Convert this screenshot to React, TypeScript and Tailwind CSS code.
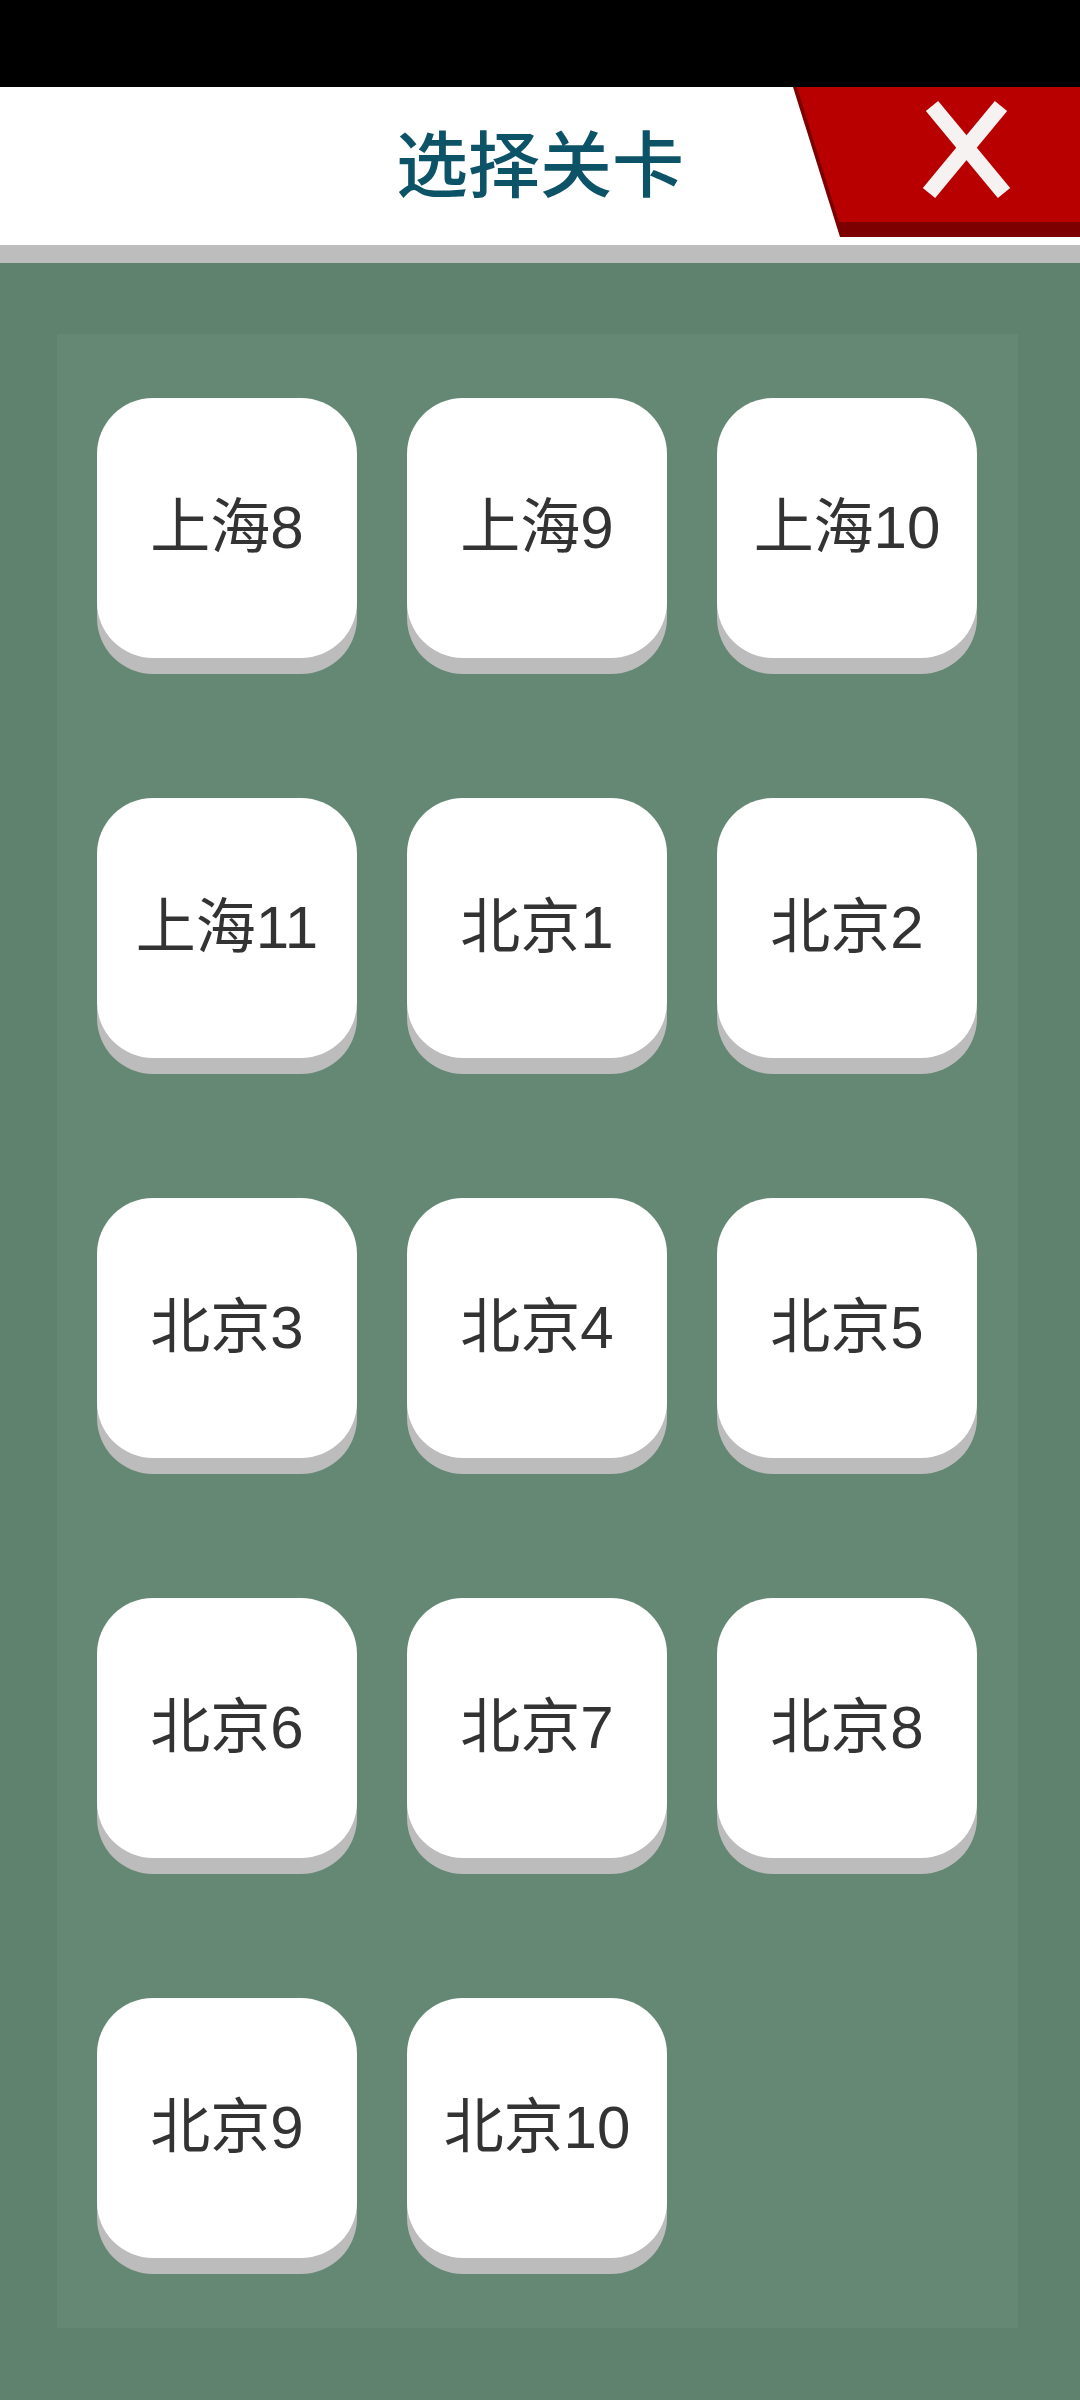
import React from "react";

const levels = [
  "上海8", "上海9", "上海10",
  "上海11", "北京1", "北京2",
  "北京3", "北京4", "北京5",
  "北京6", "北京7", "北京8",
  "北京9", "北京10",
];

function CloseTab() {
  return (
    <svg width="287" height="150" viewBox="0 0 287 150" className="absolute right-0 top-0">
      <polygon points="0,0 287,0 287,150 47,150" fill="#7d0000" />
      <polygon points="4,0 287,0 287,135 46,135" fill="#b80000" />
      <line x1="139" y1="19" x2="211" y2="106" stroke="#f7f2f2" strokeWidth="16" />
      <line x1="208" y1="19" x2="136" y2="106" stroke="#f7f2f2" strokeWidth="16" />
    </svg>
  );
}

export default function App() {
  return (
    <div
      className="w-[1080px] min-h-[2400px] bg-[#5f826f] flex flex-col"
      style={{ fontFamily: '"Liberation Sans", "Noto Sans CJK SC", sans-serif' }}
    >
      {/* status bar */}
      <div className="h-[87px] bg-black" />

      {/* header */}
      <div className="relative h-[158px] bg-white flex items-center justify-center">
        <h1 className="text-[72px] leading-none font-medium text-[#0d5367]">选择关卡</h1>
        <CloseTab />
      </div>
      <div className="h-[18px] bg-[#bdbdbd]" />

      {/* level panel */}
      <div className="ml-[57px] mt-[71px] w-[961px] bg-[#658874] pl-[40px] pr-[41px] pt-[64px] pb-[70px]">
        <div className="grid grid-cols-[260px_260px_260px] gap-x-[50px] gap-y-[140px]">
          {levels.map((name) => (
            <button
              key={name}
              className="h-[260px] w-[260px] rounded-[56px] bg-white shadow-[0_16px_0_#bcbcbc] flex items-center justify-center text-[60px] leading-none text-[#333333]"
            >
              {name}
            </button>
          ))}
        </div>
      </div>
    </div>
  );
}
